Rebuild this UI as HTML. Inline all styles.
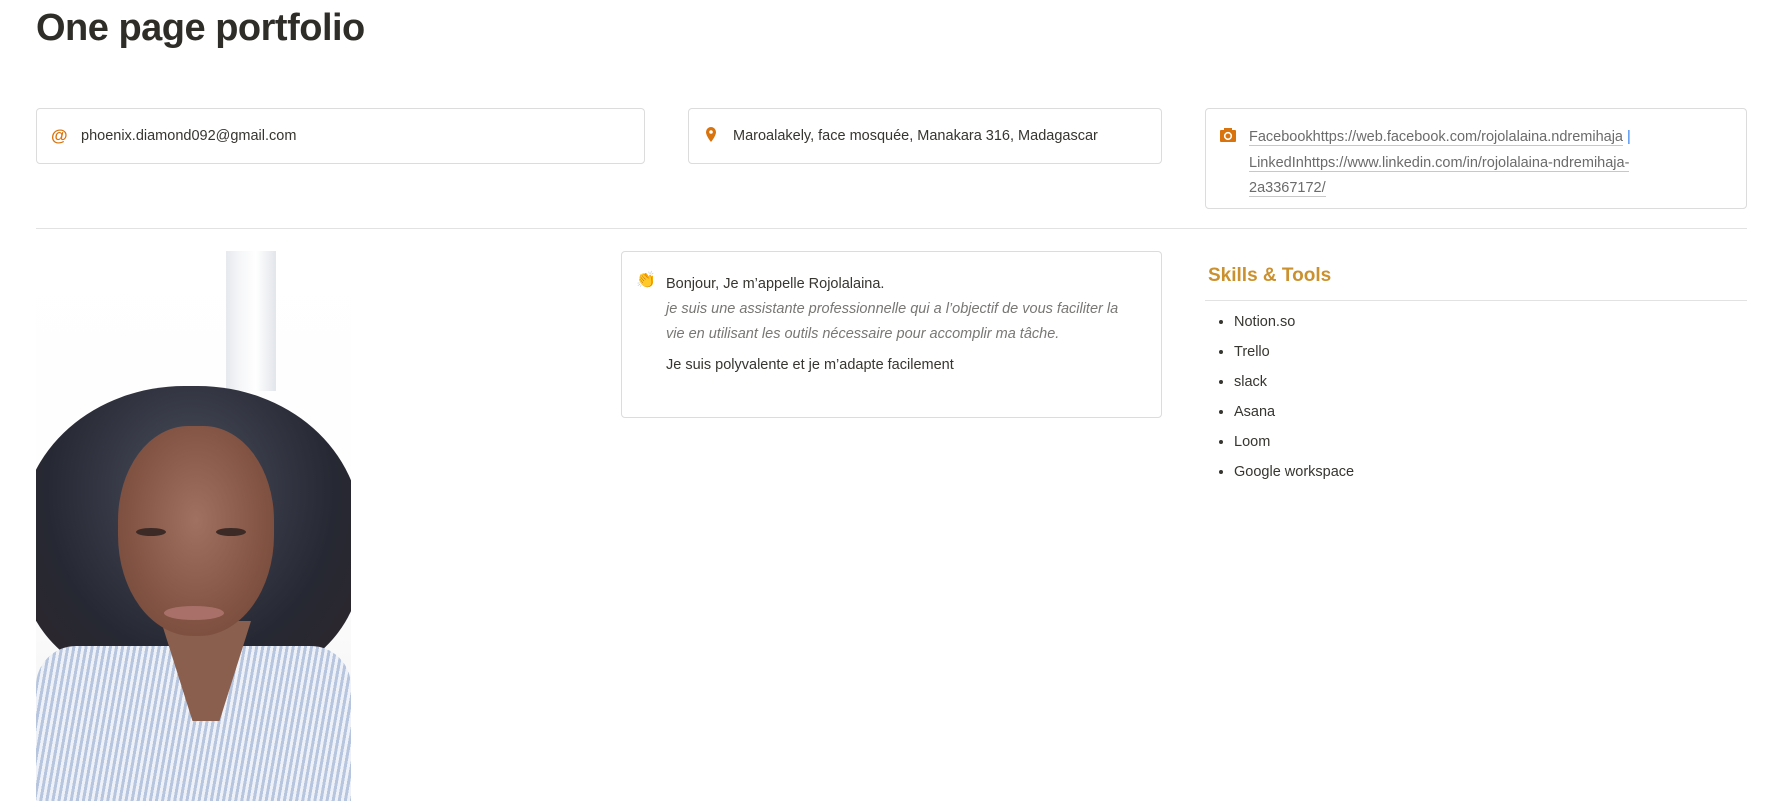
<!DOCTYPE html>
<html><head><meta charset="utf-8"><style>
html,body{margin:0;width:1770px;height:802px;overflow:hidden}
body{background:#fff;font-family:"Liberation Sans",sans-serif;color:#37352f;position:relative}
.a{position:absolute}
h1{position:absolute;left:36px;top:7px;margin:0;font-size:38px;font-weight:bold;color:#2f2d28;letter-spacing:-0.5px}
.card{position:absolute;border:1px solid #dcdcdc;border-radius:4px;box-sizing:border-box;background:#fff}
.t{font-size:14.5px;color:#37352f}
.lnk{color:#6b6b6b;border-bottom:1px solid #c8c8c8}
li{height:30px;font-size:14.5px}
</style></head><body>
<h1>One page portfolio</h1>

<div class="card" style="left:36px;top:108px;width:609px;height:56px">
 <div class="a" style="left:14px;top:17px;color:#d9730d;font-weight:bold;font-size:17px">@</div>
 <div class="a t" style="left:44px;top:19px">phoenix.diamond092@gmail.com</div>
</div>

<div class="card" style="left:688px;top:108px;width:474px;height:56px">
 <svg class="a" style="left:15px;top:17px" width="14" height="18" viewBox="0 0 14 18"><path d="M7 1a5 5 0 0 0-5 5c0 4 5 10 5 10s5-6 5-10a5 5 0 0 0-5-5z" fill="#d9730d"/><circle cx="7" cy="6" r="1.8" fill="#fff"/></svg>
 <div class="a t" style="left:44px;top:19px">Maroalakely, face mosquée, Manakara 316, Madagascar</div>
</div>

<div class="card" style="left:1205px;top:108px;width:542px;height:101px">
 <svg class="a" style="left:14px;top:19px" width="16" height="14" viewBox="0 0 16 14"><rect x="0" y="2" width="16" height="12" rx="1" fill="#d9730d"/><rect x="4" y="0" width="8" height="3" fill="#d9730d"/><circle cx="8" cy="8" r="3.3" fill="none" stroke="#fff" stroke-width="1.6"/></svg>
 <div class="a" style="left:43px;top:16px;font-size:14.5px;line-height:25.5px;width:430px;color:#6b6b6b">
  <span class="lnk">Facebookhttps://web.facebook.com/rojolalaina.ndremihaja</span> <span style="color:#2f80ed">|</span><br>
  <span class="lnk">LinkedInhttps://www.linkedin.com/in/rojolalaina-ndremihaja-</span><br>
  <span class="lnk">2a3367172/</span>
 </div>
</div>

<div class="a" style="left:36px;top:228px;width:1711px;height:1px;background:#e2e2e2"></div>

<div class="a" style="left:36px;top:251px;width:315px;height:550px;overflow:hidden;background:linear-gradient(#fff,#fdfdfd 60%,#eef0ee)">
 <div class="a" style="left:190px;top:0;width:50px;height:140px;background:linear-gradient(90deg,#e6e9ee,#f6f7f9 30%,#fff 60%,#e2e5ea)"></div>
 <div class="a" style="left:-15px;top:135px;width:340px;height:300px;border-radius:48% 48% 40% 40%;background:radial-gradient(ellipse at 50% 35%,#4a4e5c,#262833 60%,#2f2629)"></div>
 <div class="a" style="left:0;top:395px;width:315px;height:155px;background:repeating-linear-gradient(100deg,#b7c6de 0 3px,#eef2f8 3px 6px);border-radius:40px 40px 0 0"></div>
 <div class="a" style="left:125px;top:370px;width:90px;height:100px;background:#8a5f4e;clip-path:polygon(0 0,100% 0,65% 100%,35% 100%)"></div>
 <div class="a" style="left:82px;top:175px;width:156px;height:210px;border-radius:45% 45% 48% 48%;background:radial-gradient(ellipse at 50% 45%,#a07060,#835444 60%,#6d4536)"></div>
 <div class="a" style="left:100px;top:277px;width:30px;height:8px;border-radius:50%;background:#3b2a26"></div>
 <div class="a" style="left:180px;top:277px;width:30px;height:8px;border-radius:50%;background:#3b2a26"></div>
 <div class="a" style="left:128px;top:355px;width:60px;height:14px;border-radius:50%;background:#a9706a"></div>
</div>

<div class="card" style="left:621px;top:251px;width:541px;height:167px">
 <div class="a" style="left:14px;top:18px;font-size:16px">👏</div>
 <div class="a" style="left:44px;top:20px;font-size:14.5px;line-height:25px;width:465px">
  <div>Bonjour, Je m’appelle Rojolalaina.</div>
  <div style="font-style:italic;color:#787774;margin-top:0">je suis une assistante professionnelle qui a l’objectif de vous faciliter la vie en utilisant les outils nécessaire pour accomplir ma tâche.</div>
  <div style="margin-top:6px">Je suis polyvalente et je m’adapte facilement</div>
 </div>
</div>

<div class="a" style="left:1208px;top:265px;font-size:19px;font-weight:bold;color:#cb912f">Skills &amp; Tools</div>
<div class="a" style="left:1205px;top:300px;width:542px;height:1px;background:#e2e2e2"></div>
<ul class="a" style="left:1212px;top:312px;margin:0;padding:0 0 0 22px;line-height:20px">
 <li>Notion.so</li><li>Trello</li><li>slack</li><li>Asana</li><li>Loom</li><li>Google workspace</li>
</ul>
</body></html>
